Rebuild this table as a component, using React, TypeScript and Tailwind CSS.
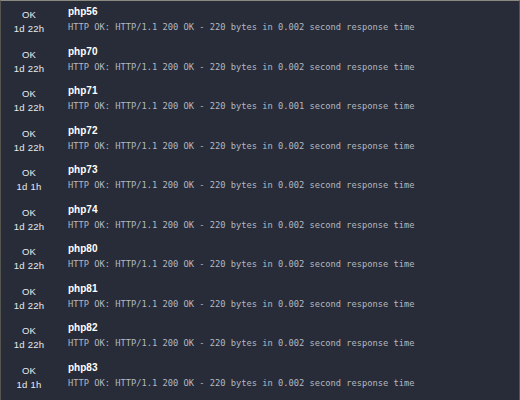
const rows = [
  { name: "php56", dur: "1d 22h", t: "0.002" },
  { name: "php70", dur: "1d 22h", t: "0.002" },
  { name: "php71", dur: "1d 22h", t: "0.001" },
  { name: "php72", dur: "1d 22h", t: "0.002" },
  { name: "php73", dur: "1d 1h", t: "0.002" },
  { name: "php74", dur: "1d 22h", t: "0.002" },
  { name: "php80", dur: "1d 22h", t: "0.002" },
  { name: "php81", dur: "1d 22h", t: "0.002" },
  { name: "php82", dur: "1d 22h", t: "0.002" },
  { name: "php83", dur: "1d 1h", t: "0.002" },
];

export default function App() {
  return (
    <div className="w-[520px] h-[400px] overflow-hidden bg-[#272c38] border-t border-t-[#8a897f] border-x border-x-[#55554f]">
      {rows.map((r) => (
        <div key={r.name} className="flex h-[39.56px]">
          <div className="w-[56px] flex flex-col items-center pt-[7px] font-['Liberation_Sans',sans-serif] text-[9.5px] tracking-[0.2px] text-[#e8eaee]">
            <div className="leading-[14px]">OK</div>
            <div className="leading-[13px]">{r.dur}</div>
          </div>
          <div className="pl-[11px] pt-[4px]">
            <div className="font-['Liberation_Sans',sans-serif] font-bold text-[10px] leading-[14px] text-white">{r.name}</div>
            <div className="font-['DejaVu_Sans_Mono',monospace] text-[8.72px] leading-[17px] text-[#b4b8c0] whitespace-pre">
              HTTP OK: HTTP/1.1 200 OK - 220 bytes in {r.t} second response time
            </div>
          </div>
        </div>
      ))}
    </div>
  );
}
